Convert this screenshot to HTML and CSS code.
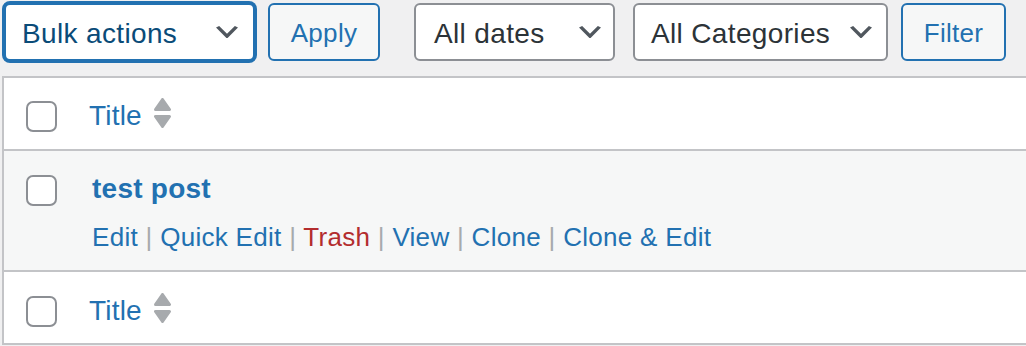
FILE: index.html
```html
<!DOCTYPE html>
<html lang="en">
<head>
<meta charset="utf-8">
<title>Posts</title>
<link rel="stylesheet" href="styles.css">
</head>
<body>
<div class="page">
  <div class="toolbar">
    <div class="select bulk">
      <span class="label">Bulk actions</span>
      <svg class="chev" viewBox="3 6 14 8" width="22" height="12.6"><path d="M5 6l5 5 5-5 2 1-7 7-7-7 2-1z"/></svg>
    </div>
    <button class="btn apply">Apply</button>
    <div class="select dates">
      <span class="label">All dates</span>
      <svg class="chev" viewBox="3 6 14 8" width="22" height="12.6"><path d="M5 6l5 5 5-5 2 1-7 7-7-7 2-1z"/></svg>
    </div>
    <div class="select cats">
      <span class="label">All Categories</span>
      <svg class="chev" viewBox="3 6 14 8" width="22" height="12.6"><path d="M5 6l5 5 5-5 2 1-7 7-7-7 2-1z"/></svg>
    </div>
    <button class="btn filter">Filter</button>
  </div>

  <div class="table">
    <div class="row head">
      <div class="check"><span class="box"></span></div>
      <div class="title-col">
        <a class="col-link">Title</a>
        <svg class="sort" viewBox="0 0 17 30" width="17" height="30"><path d="M8.5 1.5L15.5 11.5H1.5Z"/><path d="M1.5 18.5H15.5L8.5 28.5Z"/></svg>
      </div>
    </div>
    <div class="row post">
      <div class="check"><span class="box"></span></div>
      <div class="post-col">
        <a class="post-title">test post</a>
        <div class="actions"><a>Edit</a><span class="sep"> | </span><a>Quick Edit</a><span class="sep"> | </span><a class="trash">Trash</a><span class="sep"> | </span><a>View</a><span class="sep"> | </span><a>Clone</a><span class="sep"> | </span><a>Clone &amp; Edit</a></div>
      </div>
    </div>
    <div class="row foot">
      <div class="check"><span class="box"></span></div>
      <div class="title-col">
        <a class="col-link">Title</a>
        <svg class="sort" viewBox="0 0 17 30" width="17" height="30"><path d="M8.5 1.5L15.5 11.5H1.5Z"/><path d="M1.5 18.5H15.5L8.5 28.5Z"/></svg>
      </div>
    </div>
  </div>
</div>
</body>
</html>
```
FILE: styles.css
```css
html, body {
  margin: 0;
  padding: 0;
}
body {
  background: #f0f0f1;
  font-family: "Liberation Sans", Arial, sans-serif;
  color: #2c3338;
  overflow: hidden;
  width: 1026px;
  height: 346px;
}
.toolbar {
  display: flex;
  align-items: flex-start;
  padding: 3px 0 0 4px;
  height: 58px;
}
.select {
  box-sizing: border-box;
  height: 58px;
  border: 2px solid #8c8f94;
  border-radius: 6px;
  background: #fff;
  display: flex;
  align-items: center;
  padding: 0 14px 0 16px;
  font-size: 28px;
  letter-spacing: 0.35px;
  color: #2c3338;
}
.select .label {
  flex: 1;
  white-space: nowrap;
  padding-top: 3px;
}
.chev {
  fill: #50575e;
  flex: none;
}
.bulk {
  width: 251px;
  border-color: #2271b1;
  box-shadow: 0 0 0 2px #2271b1;
  color: #0a4b78;
  padding-right: 15px;
}
.dates {
  width: 201px;
  margin-left: 34px;
  padding-left: 18px;
  padding-right: 12px;
}
.cats {
  width: 255px;
  margin-left: 18px;
  padding-right: 14px;
}
.btn {
  box-sizing: border-box;
  height: 58px;
  border: 2px solid #2271b1;
  border-radius: 6px;
  background: #f6f7f7;
  color: #2271b1;
  font-family: inherit;
  font-size: 26px;
  letter-spacing: 0.3px;
  padding: 2px 0 0;
  cursor: pointer;
}
.apply {
  width: 112px;
  margin-left: 13px;
}
.filter {
  width: 105px;
  margin-left: 13px;
}
.table {
  margin: 15px 0 0 2px;
  width: 1040px;
  border: 2px solid #c3c4c7;
  background: #fff;
}
.row {
  display: flex;
  align-items: flex-start;
}
.head {
  height: 71px;
  border-bottom: 2px solid #c3c4c7;
}
.post {
  height: 119px;
  background: #f6f7f7;
}
.foot {
  height: 71px;
  border-top: 2px solid #c3c4c7;
}
.check {
  box-sizing: border-box;
  width: 85px;
  padding-left: 22px;
  padding-top: 24px;
}
.head .check {
  padding-top: 23px;
}
.box {
  display: block;
  box-sizing: border-box;
  width: 31px;
  height: 31px;
  border: 2px solid #8c8f94;
  border-radius: 7px;
  background: #fff;
}
.title-col {
  display: flex;
  align-items: flex-start;
  padding-top: 18px;
}
.foot .title-col {
  padding-top: 19px;
}
.col-link {
  font-size: 28px;
  line-height: 40px;
  color: #2271b1;
  letter-spacing: 0.2px;
}
.sort {
  margin-left: 12px;
  margin-top: 2px;
  fill: #a7aaad;
  stroke: #a7aaad;
  stroke-width: 3;
  stroke-linejoin: round;
}
.post-col {
  padding-top: 18px;
  padding-left: 3px;
}
.post-title {
  display: block;
  font-size: 28px;
  line-height: 40px;
  font-weight: bold;
  color: #2271b1;
  letter-spacing: 0.25px;
}
.actions {
  margin-top: 10px;
  font-size: 26px;
  line-height: 36px;
  letter-spacing: 0.3px;
  white-space: nowrap;
  color: #2271b1;
}
.actions a {
  color: #2271b1;
}
.actions .trash {
  color: #b32d2e;
}
.sep {
  color: #a7aaad;
}
```
